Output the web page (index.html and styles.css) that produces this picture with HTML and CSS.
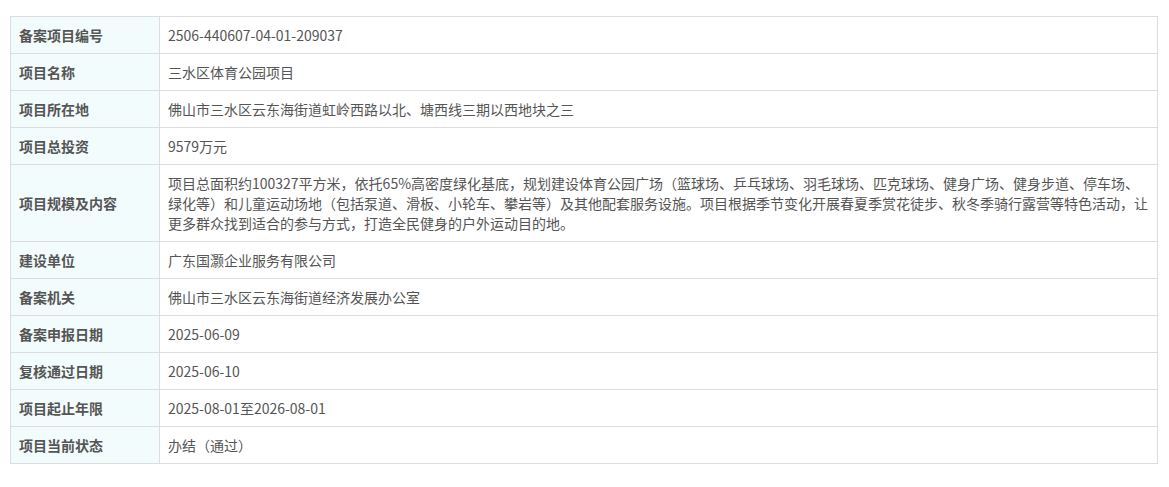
FILE: index.html
```html
<!DOCTYPE html>
<html lang="zh-CN">
<head>
<meta charset="UTF-8" />
<meta name="viewport" content="width=device-width, initial-scale=1.0" />
<title>备案项目信息</title>
<link rel="stylesheet" href="styles.css">
</head>
<body>
<div class="detail_wrap">
<table class="detail_table">
<tbody>
<tr>
<th>备案项目编号</th>
<td>2506-440607-04-01-209037</td>
</tr>
<tr>
<th>项目名称</th>
<td>三水区体育公园项目</td>
</tr>
<tr>
<th>项目所在地</th>
<td>佛山市三水区云东海街道虹岭西路以北、塘西线三期以西地块之三</td>
</tr>
<tr>
<th>项目总投资</th>
<td>9579万元</td>
</tr>
<tr>
<th>项目规模及内容</th>
<td>项目总面积约100327平方米，依托65%高密度绿化基底，规划建设体育公园广场（篮球场、乒乓球场、羽毛球场、匹克球场、健身广场、健身步道、停车场、绿化等）和儿童运动场地（包括泵道、滑板、小轮车、攀岩等）及其他配套服务设施。项目根据季节变化开展春夏季赏花徒步、秋冬季骑行露营等特色活动，让更多群众找到适合的参与方式，打造全民健身的户外运动目的地。</td>
</tr>
<tr>
<th>建设单位</th>
<td>广东国灏企业服务有限公司</td>
</tr>
<tr>
<th>备案机关</th>
<td>佛山市三水区云东海街道经济发展办公室</td>
</tr>
<tr>
<th>备案申报日期</th>
<td>2025-06-09</td>
</tr>
<tr>
<th>复核通过日期</th>
<td>2025-06-10</td>
</tr>
<tr>
<th>项目起止年限</th>
<td>2025-08-01至2026-08-01</td>
</tr>
<tr>
<th>项目当前状态</th>
<td>办结（通过）</td>
</tr>
</tbody>
</table>
</div>
</body>
</html>
```

FILE: styles.css
```css
body {
margin: 0;
background: #fff;
font-family: "Microsoft YaHei", "Noto Sans CJK SC", "Noto Sans", sans-serif;
font-size: 14px;
color: #555;
}

.detail_wrap {
padding: 16px 11px 0 10px;
}

.detail_table {
width: 1148px;
border-collapse: collapse;
table-layout: fixed;
}

.detail_table th,
.detail_table td {
border: 1px solid #ddd;
padding: 8px 8px;
line-height: 20px;
text-align: left;
vertical-align: middle;
}

.detail_table th {
width: 132px;
background-color: #f3fcfc;
font-weight: bold;
color: #555;
}

.detail_table td {
color: #555;
}
```
